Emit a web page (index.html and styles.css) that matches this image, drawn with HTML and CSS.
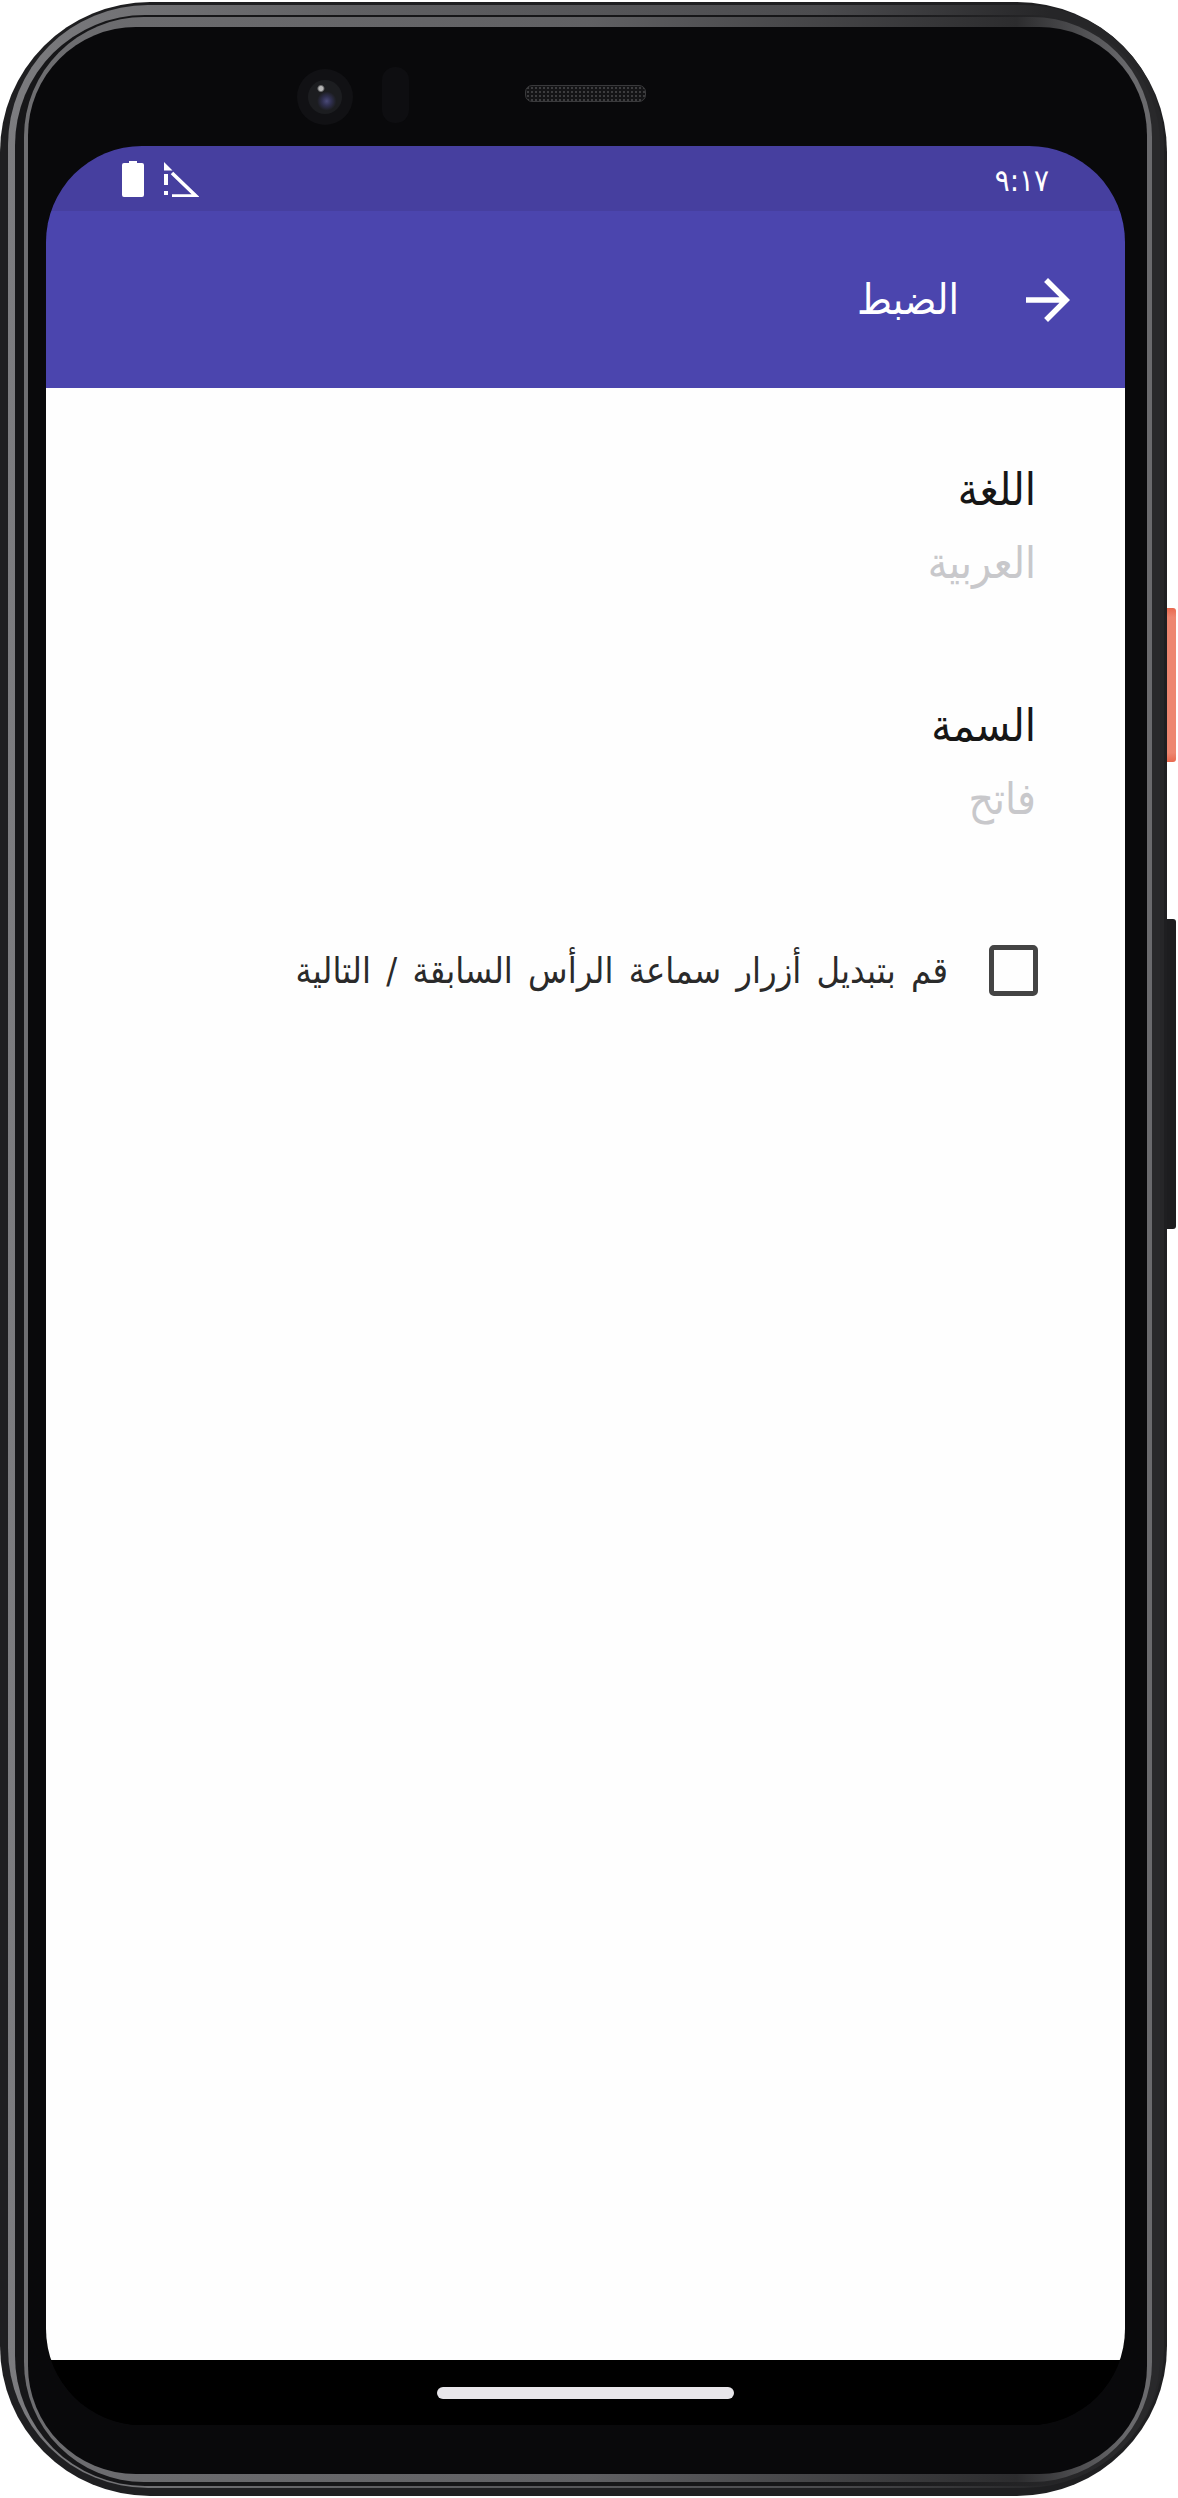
FILE: index.html
```html
<!DOCTYPE html>
<html lang="ar">
<head>
    <meta charset="UTF-8">
    <meta name="viewport" content="width=device-width, initial-scale=1.0">
    <title>الضبط</title>
    <link rel="stylesheet" href="styles.css">
</head>
<body>
    <div class="phone">
        <!-- Side buttons -->
        <div class="side-btn side-btn-power"></div>
        <div class="side-btn side-btn-volume"></div>

        <div class="rim-outer">
            <div class="rim-gap">
                <div class="rim-inner">
                    <div class="bezel">
                        <!-- Camera and speaker -->
                        <div class="top-bezel">
                            <div class="camera">
                                <span class="camera-lens"></span>
                            </div>
                            <div class="sensor"></div>
                            <div class="speaker"></div>
                        </div>

                        <div class="screen" dir="rtl">
                            <div class="status-bar">
                                <div class="status-time">٩:١٧</div>
                                <div class="status-icons">
                                    <svg class="icon-signal" viewBox="0 0 36 36" width="36" height="36">
                                        <path d="M1 1l8.5 8.5H1z" fill="#fff"/>
                                        <path d="M9 12l24 23H9" fill="none" stroke="#fff" stroke-width="3.6"/>
                                        <path d="M1 13h4v11H1zM1 30h4v4H1z" fill="#fff"/>
                                    </svg>
                                    <svg class="icon-battery" viewBox="0 0 22 36" width="22" height="36">
                                        <path d="M7 0h8v2h5a2 2 0 0 1 2 2v30a2 2 0 0 1-2 2H2a2 2 0 0 1-2-2V4a2 2 0 0 1 2-2h5z" fill="#fff"/>
                                    </svg>
                                </div>
                            </div>

                            <header class="app-bar">
                                <svg class="icon-arrow" viewBox="0 0 24 24" width="66" height="66">
                                    <path d="M4 11h12.17l-5.59-5.59L12 4l8 8-8 8-1.41-1.41L16.17 13H4z" fill="#fff"/>
                                </svg>
                                <h1 class="app-title">الضبط</h1>
                            </header>

                            <main class="settings">
                                <div class="setting">
                                    <div class="setting-title">اللغة</div>
                                    <div class="setting-value">العربية</div>
                                </div>
                                <div class="setting">
                                    <div class="setting-title">السمة</div>
                                    <div class="setting-value">فاتح</div>
                                </div>
                                <label class="check-row">
                                    <span class="checkbox"></span>
                                    <span class="check-label">قم بتبديل أزرار سماعة الرأس السابقة / التالية</span>
                                </label>
                            </main>

                            <div class="nav-bar">
                                <div class="home-pill"></div>
                            </div>
                        </div>
                    </div>
                </div>
            </div>
        </div>
    </div>
</body>
</html>
```
FILE: styles.css
```css
* {
    margin: 0;
    padding: 0;
    box-sizing: border-box;
}

body {
    width: 1178px;
    height: 2498px;
    overflow: hidden;
    background-color: #fff;
    font-family: 'DejaVu Sans Condensed', 'DejaVu Sans', sans-serif;
    padding-top: 2px;
}

/* Device frame */
.phone {
    position: relative;
    width: 1167px;
    height: 2494px;
    padding: 3px 3px 8px 8px;
    border-radius: 150px;
    background-color: #1f1f21;
}

.rim-outer {
    height: 100%;
    padding: 10px 4px 2px 7px;
    border-radius: 140px;
    background: linear-gradient(90deg, #7c7c7f 0, #606063 30%, #4c4c4f 70%, #262628 90%);
}

.rim-gap {
    height: 100%;
    padding: 2px 8px 4px 9px;
    border-radius: 130px;
    background: linear-gradient(90deg, #161618 0, #161618 70%, #29292b 96%);
}

.rim-inner {
    height: 100%;
    padding: 10px 5px 8px 4px;
    border-radius: 120px;
    background: linear-gradient(90deg, #6e6e71 0, #606063 50%, #2c2c2e 88%, #6a6a6d 98%);
}

.bezel {
    height: 100%;
    padding: 0 22px 0 18px;
    border-radius: 108px;
    background-color: #09090b;
    overflow: hidden;
}

.top-bezel {
    height: 119px;
    padding: 40px 0 0 251px;
    display: flex;
    align-items: flex-start;
}

.camera {
    width: 56px;
    height: 56px;
    margin-top: 2px;
    border-radius: 50%;
    background-color: #111114;
    display: flex;
    align-items: center;
    justify-content: center;
}

.camera-lens {
    width: 34px;
    height: 34px;
    border-radius: 50%;
    background:
        radial-gradient(circle at 38% 25%, #b5b5b5 0, #b5b5b5 6%, transparent 12%),
        radial-gradient(circle at 55% 62%, #4a4a78 0, #303050 16%, transparent 34%),
        #1c1d20;
}

.sensor {
    width: 27px;
    height: 56px;
    margin-left: 29px;
    border-radius: 13px;
    background-color: #0e0e11;
}

.speaker {
    width: 121px;
    height: 17px;
    margin: 18px 0 0 116px;
    border-radius: 7px;
    border: 1px solid #3a3a3c;
    background-color: #141416;
    background-image: radial-gradient(circle, #3c3c3e 1px, transparent 1.2px);
    background-size: 4px 4px;
}

/* Screen */
.screen {
    width: 1079px;
    height: 2279px;
    border-radius: 96px;
    overflow: hidden;
    background-color: #000;
    display: flex;
    flex-direction: column;
}

.status-bar {
    height: 65px;
    flex-shrink: 0;
    background-color: #463f9f;
    color: #fff;
    display: flex;
    justify-content: space-between;
    align-items: center;
    padding: 0 76px 0 76px;
}

.status-time {
    font-size: 31px;
    line-height: 1;
    margin-top: 3px;
}

.status-icons {
    display: flex;
    align-items: center;
    gap: 19px;
}

.app-bar {
    height: 177px;
    flex-shrink: 0;
    background-color: #4b45ae;
    color: #fff;
    display: flex;
    align-items: center;
    padding-right: 44px;
    gap: 56px;
}

.app-title {
    font-size: 42px;
    font-weight: 400;
    line-height: 1;
}

.settings {
    flex: 1;
    background-color: #fefefe;
    padding: 72px 89px 0 0;
}

.setting {
    height: 236px;
}

.setting-title {
    font-size: 45px;
    line-height: 60px;
    color: #161616;
}

.setting-value {
    font-size: 44px;
    line-height: 60px;
    margin-top: 13px;
    color: #c8c8cb;
}

.check-row {
    display: flex;
    align-items: center;
    gap: 41px;
    margin-top: 13px;
}

.checkbox {
    width: 49px;
    height: 51px;
    border: 5px solid #444;
    border-radius: 5px;
    flex-shrink: 0;
    margin-right: -2px;
}

.check-label {
    font-size: 36px;
    line-height: 50px;
    word-spacing: 5px;
    color: #2a2a2a;
}

.nav-bar {
    height: 65px;
    flex-shrink: 0;
    background-color: #000;
    display: flex;
    justify-content: center;
    padding-top: 27px;
}

.home-pill {
    width: 297px;
    height: 12px;
    border-radius: 6px;
    background-color: #e8e6ea;
}

.side-btn {
    position: absolute;
    left: 1167px;
    width: 9px;
    border-radius: 0 3px 3px 0;
}

.side-btn-power {
    top: 606px;
    height: 154px;
    background: linear-gradient(180deg, #e8694f 0, #ee8670 6%, #ee8670 94%, #e8694f 100%);
}

.side-btn-volume {
    top: 917px;
    height: 310px;
    background-color: #1d1d1f;
}
```
